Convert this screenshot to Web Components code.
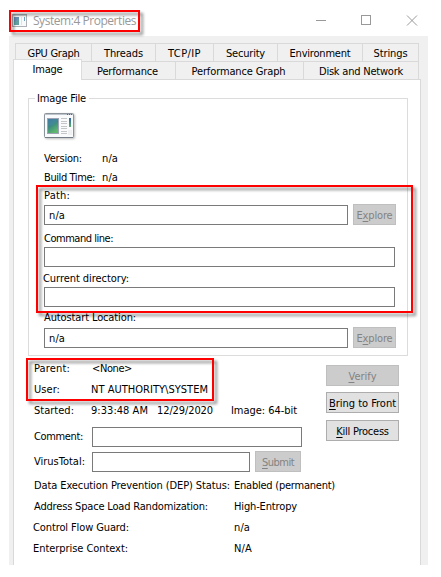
<!DOCTYPE html>
<html lang="en"><head><meta charset="utf-8"><title>System:4 Properties</title>
<style>
body{margin:0;width:441px;height:577px;background:#fff;overflow:hidden;position:relative;font:11px/14px "DejaVu Sans Condensed","DejaVu Sans",sans-serif;font-stretch:condensed;color:#000}
title-bar ui-text{font:12px/16px "Open Sans","Noto Sans",sans-serif;color:#999;padding-top:0}
ui-button[disabled]{color:#838383}
</style></head><body>
<title-bar><ui-text w="103">System:4 Properties</ui-text></title-bar>
<prop-sheet>
  <ui-tab slot="back" style="width:77px"><ui-text w="52">GPU Graph</ui-text></ui-tab>
  <ui-tab slot="back" style="width:65px"><ui-text w="39">Threads</ui-text></ui-tab>
  <ui-tab slot="back" style="width:59px"><ui-text w="33">TCP/IP</ui-text></ui-tab>
  <ui-tab slot="back" style="width:65px"><ui-text w="39">Security</ui-text></ui-tab>
  <ui-tab slot="back" style="width:86px"><ui-text w="61">Environment</ui-text></ui-tab>
  <ui-tab slot="back" style="width:57px"><ui-text w="34">Strings</ui-text></ui-tab>
  <ui-tab slot="front" selected style="width:69px"><ui-text w="30">Image</ui-text></ui-tab>
  <ui-tab slot="front" style="width:95px;padding-right:2px"><ui-text w="61">Performance</ui-text></ui-tab>
  <ui-tab slot="front" style="width:129px;padding-right:2px"><ui-text w="94">Performance Graph</ui-text></ui-tab>
  <ui-tab slot="front" style="width:116px"><ui-text w="84">Disk and Network</ui-text></ui-tab>
  <group-box>
    <ui-text slot="legend" w="49">Image File</ui-text>
    <ui-row style="--h:38px"><app-icon></app-icon></ui-row>
    <ui-row style="--h:19px"><ui-text w="38" style="--c:58px">Version:</ui-text><ui-text w="16">n/a</ui-text></ui-row>
    <ui-row style="--h:18px"><ui-text w="51" style="--c:58px">Build Time:</ui-text><ui-text w="16">n/a</ui-text></ui-row>
    <ui-row style="--h:16px"><ui-text w="26">Path:</ui-text></ui-row>
    <ui-row style="--h:27px"><ui-field style="width:304px;margin-top:1px"><ui-text w="16">n/a</ui-text></ui-field><ui-button disabled style="width:43px;margin-left:5px"><ui-text w="36">E<u>x</u>plore</ui-text></ui-button></ui-row>
    <ui-row style="--h:16px"><ui-text w="69">Command line:</ui-text></ui-row>
    <ui-row style="--h:24px"><ui-field style="width:351px"></ui-field></ui-row>
    <ui-row style="--h:16px;margin-left:-1px"><ui-text w="86">Current directory:</ui-text></ui-row>
    <ui-row style="--h:23px"><ui-field style="width:351px"></ui-field></ui-row>
    <ui-row style="--h:17px"><ui-text w="92">Autostart Location:</ui-text></ui-row>
    <ui-row style="--h:21px"><ui-field style="width:304px;margin-top:1px"><ui-text w="16">n/a</ui-text></ui-field><ui-button disabled style="width:43px;margin-left:5px"><ui-text w="36">E<u>x</u>plore</ui-text></ui-button></ui-row>
  </group-box>
  <detail-area>
    <ui-row style="--h:21px"><ui-text w="36" style="--c:58px">Parent:</ui-text><ui-text w="40">&lt;None&gt;</ui-text></ui-row>
    <ui-row style="--h:21px"><ui-text w="26" style="--c:57px">User:</ui-text><ui-text w="117">NT AUTHORITY\SYSTEM</ui-text></ui-row>
    <ui-row style="--h:24px"><ui-text w="40" style="--c:57px">Started:</ui-text><ui-text w="57" style="--c:66px">9:33:48 AM</ui-text><ui-text w="56" style="--c:74px">12/29/2020</ui-text><ui-text w="66">Image: 64-bit</ui-text></ui-row>
    <ui-row style="--h:24px"><ui-text w="49" style="--c:58px;margin-top:2px">Comment:</ui-text><ui-field style="width:210px"></ui-field></ui-row>
    <ui-row style="--h:27px"><ui-text w="51" style="--c:58px;margin-top:3px">VirusTotal:</ui-text><ui-field style="width:158px;margin-top:1px"></ui-field><ui-button disabled style="width:46px;margin-left:5px"><ui-text w="32"><u>S</u>ubmit</ui-text></ui-button></ui-row>
    <ui-row style="--h:21px"><ui-text w="196" style="--c:200px">Data Execution Prevention (DEP) Status:</ui-text><ui-text w="101">Enabled (permanent)</ui-text></ui-row>
    <ui-row style="--h:21px"><ui-text w="174" style="--c:200px">Address Space Load Randomization:</ui-text><ui-text w="63">High-Entropy</ui-text></ui-row>
    <ui-row style="--h:21px"><ui-text w="96" style="--c:201px;margin-left:-1px">Control Flow Guard:</ui-text><ui-text w="16">n/a</ui-text></ui-row>
    <ui-row style="--h:14px"><ui-text w="95" style="--c:201px;margin-left:-1px">Enterprise Context:</ui-text><ui-text w="18">N/A</ui-text></ui-row>
    <ui-button slot="actions" disabled style="margin-bottom:6px"><ui-text w="28"><u>V</u>erify</ui-text></ui-button>
    <ui-button slot="actions" style="margin-bottom:7px"><ui-text w="67"><u>B</u>ring to Front</ui-text></ui-button>
    <ui-button slot="actions"><ui-text w="52.5"><u>K</u>ill Process</ui-text></ui-button>
  </detail-area>
</prop-sheet>
<red-frame style="left:9px;top:10px;width:131px;height:22px"></red-frame>
<red-frame style="left:36px;top:185px;width:377px;height:128px"></red-frame>
<red-frame style="left:26px;top:358px;width:188px;height:43px"></red-frame>
<script>
function define(name, html, connected) {
  customElements.define(name, class extends HTMLElement {
    constructor() { super(); this.attachShadow({mode: 'open'}).innerHTML = '<style>:host{box-sizing:border-box}*{box-sizing:border-box}</style>' + html; }
    connectedCallback() { if (connected) connected.call(this); }
  });
}
const icon = `<rect x=".5" y=".5" width="29" height="24" rx="1" fill="#f9fafb" stroke="#8c939b"/><path d="M1 1.5h28" stroke="#bdc3ca"/><path d="M23 1.5h1M25 1.5h1M27 1.5h1" stroke="#53657b"/><path d="M1 24.5h28" stroke="#737c86"/><rect x="3.5" y="5.5" width="11" height="15" fill="url(#g)" stroke="#9da2b5"/><path d="M4 13c4 0 8-3 10-6v-1H4z" fill="#4d8bab" opacity=".45"/><path d="M17 5.5h6M17 8.5h6M17 10.5h6M17 13.5h6M17 15.5h6M17 18.5h6M17 20.5h6" stroke="#c3c5c7"/><rect x="25" y="5" width="2" height="9" fill="url(#b)"/><rect x="24" y="17" width="4" height="5" fill="#eef0f1"/><defs><linearGradient id="g" x1="0" y1="0" x2=".5" y2="1"><stop stop-color="#356b9b"/><stop offset=".5" stop-color="#3b8982"/><stop offset="1" stop-color="#61b96c"/></linearGradient><linearGradient id="b" x1="0" y1="0" x2="0" y2="1"><stop stop-color="#3560a8"/><stop offset="1" stop-color="#55b26a"/></linearGradient></defs>`;

define('ui-row', '<style>:host{display:flex;height:var(--h);align-items:flex-start}</style><slot></slot>');
define('app-icon', `<style>:host{display:block;width:32px;height:27px}svg{display:block;filter:drop-shadow(1px 1px 1px #0004)}</style><svg width="30" height="25">${icon}</svg>`);
define('ui-field', '<style>:host{display:flex;height:20px;border:1px solid #7a7a7a;background:#fff;padding:2px 0 0 4px;flex:none}</style><slot></slot>');
define('ui-button', '<style>:host{display:flex;height:21px;border:1px solid #adadad;background:#e1e1e1;justify-content:center;padding-top:3px;flex:none}:host([disabled]){background:#ccc;border-color:#bfbfbf}</style><slot></slot>');
define('ui-tab', '<style>:host{display:flex;height:19px;margin-right:-1px;border:1px solid #d9d9d9;background:#f0f0f0;justify-content:center;padding-top:2px;flex:none}:host([selected]){height:21px;background:#fff;border-color:#dcdcdc;border-bottom:0;padding-top:2px;position:relative;z-index:1;margin-top:-2px}</style><slot></slot>');
define('group-box', '<style>:host{display:block;margin:18px 0 0 14px;width:380px;height:258px;border:1px solid #dcdcdc}header{display:flex;width:54px;height:14px;margin:-8px 0 0 6px;padding-left:2px;background:#fff}main{padding:8px 0 0 15px}</style><header><slot name="legend"></slot></header><main><slot></slot></main>');
define('detail-area', '<style>:host{display:grid;grid-template-columns:292px 73px;padding:5px 0 0 20px}aside{display:flex;flex-direction:column;padding-top:4px}</style><main><slot></slot></main><aside><slot name="actions"></slot></aside>');
define('prop-sheet', '<style>:host{display:block;margin-left:9px;width:419px;height:529px;background:#f0f0f0;padding:7px 7px 0 4px}.back{display:flex;padding-left:2px;height:18px}.front{display:flex;height:18px}.page{width:408px;height:486px;background:#fff;border:1px solid #d9d9d9;border-bottom:0}</style><div class="back"><slot name="back"></slot></div><div class="front"><slot name="front"></slot></div><div class="page"><slot></slot></div>');
define('title-bar', `<style>:host{display:flex;height:36px;padding:13px 14px 0 12px;align-items:flex-start}.i{margin:1px 6px 0 0}.c{margin:1px 0 0 auto}svg{display:block}</style>
<svg class="i" width="15" height="13" opacity=".7"><rect x=".5" y=".5" width="14" height="12" fill="#f5f7f8" stroke="#8b9197"/><path d="M1 1.5h13" stroke="#b9bfc5"/><rect x="2" y="3" width="5" height="8" fill="#23797d"/><path d="M2 3h5v2l-5 3z" fill="#285f91"/><path d="M9.5 3v8" stroke="#d3d5d7"/><path d="M12.5 3v4" stroke="#3479a2"/></svg>
<slot></slot><svg class="c" width="112" height="12" fill="none" stroke="#999"><path d="M1 6.5h10"/><rect x="46.5" y="1.5" width="9" height="9"/><path d="M92 1.5l10 10M102 1.5l-10 10"/></svg>`);
define('red-frame', '<style>:host{display:block;position:absolute;z-index:3;border:2px solid #f00;filter:drop-shadow(3px 3px 1.5px #0007)}</style>');
/* Text run stretched or tightened with letter-spacing to its width in w; --c is the column width. */
define('ui-text', '<style>:host{display:block;width:var(--c,auto);flex:none;white-space:nowrap;padding-top:1px}span{display:inline-block}::slotted(u){text-decoration:underline;text-underline-offset:2px}</style><span><slot></slot></span>', function () {
  const s = this.shadowRoot.querySelector('span'), w = +this.getAttribute('w'), n = this.textContent.length;
  s.style.letterSpacing = (w - s.getBoundingClientRect().width) / n + 'px';
});
</script>
</body></html>
